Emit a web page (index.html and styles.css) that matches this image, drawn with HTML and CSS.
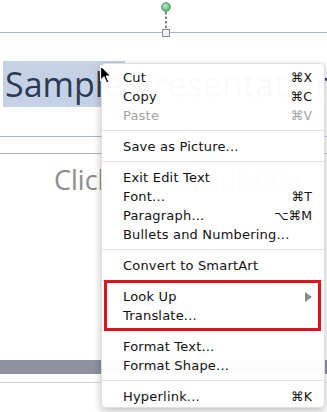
FILE: index.html
```html
<!DOCTYPE html>
<html>
<head>
<meta charset="utf-8">
<link rel="stylesheet" href="styles.css">
</head>
<body>
<div class="slide">
  <div class="top-space"></div>
  <div class="title-box">
    <div class="title-line"><span class="sel">Sample</span> Presentation</div>
  </div>
  <div class="sub-box">
    <div class="sub-line">Click to add subtitle</div>
  </div>
  <div class="bottom-bar"></div>
  <div class="bottom-line"></div>
</div>

<svg class="handle" width="14" height="40" viewBox="0 0 14 40">
  <defs>
    <radialGradient id="g" cx="0.4" cy="0.35" r="0.7">
      <stop offset="0" stop-color="#b8ecc8"/>
      <stop offset="1" stop-color="#4fae72"/>
    </radialGradient>
  </defs>
  <line x1="7" y1="12" x2="7" y2="29" stroke="#3e6b4f" stroke-width="1.5" stroke-dasharray="2.5 2"/>
  <circle cx="7" cy="7" r="4.3" fill="url(#g)" stroke="#4c8c62" stroke-width="1"/>
  <rect x="3.5" y="29.5" width="7" height="7" fill="#eef0f2" stroke="#8a8f96" stroke-width="1"/>
</svg>

<div class="menu">
  <div class="item"><span>Cut</span><span class="key">⌘X</span></div>
  <div class="item"><span>Copy</span><span class="key">⌘C</span></div>
  <div class="item off"><span>Paste</span><span class="key">⌘V</span></div>
  <div class="sep"></div>
  <div class="item"><span>Save as Picture...</span></div>
  <div class="sep"></div>
  <div class="item"><span>Exit Edit Text</span></div>
  <div class="item"><span>Font...</span><span class="key">⌘T</span></div>
  <div class="item"><span>Paragraph...</span><span class="key">⌥⌘M</span></div>
  <div class="item"><span>Bullets and Numbering...</span></div>
  <div class="sep"></div>
  <div class="item"><span>Convert to SmartArt</span></div>
  <div class="sep"></div>
  <div class="item"><span>Look Up</span><span class="arrow"></span></div>
  <div class="item"><span>Translate...</span></div>
  <div class="sep"></div>
  <div class="item"><span>Format Text...</span></div>
  <div class="item"><span>Format Shape...</span></div>
  <div class="sep"></div>
  <div class="item"><span>Hyperlink...</span><span class="key">⌘K</span></div>
  <div class="redbox"></div>
</div>

<svg class="cursor" width="14" height="22" viewBox="0 0 14 22">
  <path d="M1.5 1.5 L1.5 16.5 L5 13 L7.6 19 L10 18 L7.4 12.2 L12 12.2 Z" fill="#000" stroke="#fff" stroke-width="1.2" stroke-linejoin="round"/>
</svg>
</body>
</html>
```
FILE: styles.css
```css
html, body {
  margin: 0;
  padding: 0;
}
body {
  width: 327px;
  height: 412px;
  overflow: hidden;
  position: relative;
  background: #ffffff;
  font-family: "Open Sans", "DejaVu Sans", sans-serif;
}
.slide {
  display: flex;
  flex-direction: column;
  width: 327px;
}
.top-space {
  height: 32px;
}
.title-box {
  border-top: 1px solid #a6b6d6;
  border-bottom: 1px solid #a6b6d6;
  padding-top: 28px;
  box-sizing: border-box;
  height: 105px;
  overflow: hidden;
}
.title-line {
  white-space: nowrap;
  font-size: 34px;
  line-height: 46px;
  color: #2c3b54;
  padding-left: 3px;
}
.sel {
  background: #c5d2e5;
  padding: 0 2px 0 2px;
}
.sub-box {
  margin-top: 16px;
  border-top: 1px solid #b4b4b8;
  height: 207px;
  box-sizing: border-box;
  overflow: hidden;
}
.sub-line {
  white-space: nowrap;
  font-size: 27px;
  line-height: 32px;
  color: #8c8c8c;
  padding-left: 54px;
  padding-top: 10px;
}
.bottom-bar {
  height: 14px;
  background: #8d91a2;
}
.bottom-line {
  margin-top: 8px;
  height: 1px;
  background: #d4d4d8;
}
.handle {
  position: absolute;
  left: 159px;
  top: 0;
}
.menu {
  position: absolute;
  left: 101px;
  top: 63px;
  width: 224px;
  height: 345px;
  box-sizing: border-box;
  padding-top: 4px;
  background: rgba(255, 255, 255, 0.978);
  border: 1px solid rgba(0, 0, 0, 0.12);
  border-radius: 5px;
  box-shadow: 0 3px 8px rgba(0, 0, 0, 0.25);
  font-family: "DejaVu Sans", sans-serif;
  font-size: 13px;
  letter-spacing: 0.2px;
  color: #111;
}
.item {
  height: 19px;
  line-height: 19px;
  display: flex;
  justify-content: space-between;
  align-items: center;
  padding: 0 12px 0 21px;
}
.item.off {
  color: #a3a3a3;
}
.key {
  font-size: 12.5px;
  letter-spacing: 0;
}
.sep {
  height: 1px;
  background: #e2e2e2;
  margin: 5px 0 6px;
}
.arrow {
  width: 0;
  height: 0;
  border-top: 5px solid transparent;
  border-bottom: 5px solid transparent;
  border-left: 7px solid #8a8a8a;
}
.redbox {
  position: absolute;
  left: 2px;
  top: 216px;
  width: 217px;
  height: 51px;
  border: 3px solid #e0121b;
  box-sizing: border-box;
}
.cursor {
  position: absolute;
  left: 99px;
  top: 64px;
}
```
